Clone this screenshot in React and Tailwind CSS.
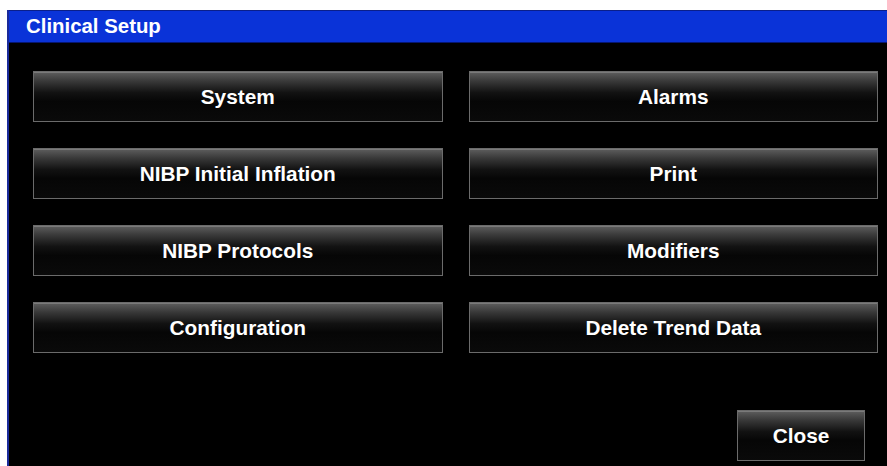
import React from 'react'

const items = [
    'System',
    'Alarms',
    'NIBP Initial Inflation',
    'Print',
    'NIBP Protocols',
    'Modifiers',
    'Configuration',
    'Delete Trend Data',
]

function SetupButton({ label, className = '' }) {
    return (
        <button
            className={`h-[51px] border border-[#6b6b6b] bg-[linear-gradient(to_bottom,#5e5e5e_0%,#3a3a3a_18%,#121212_42%,#060606_60%,#0a0a0a_100%)] text-[20.8px] font-bold text-white shadow-[inset_0_1px_0_#7a7a7a] ${className}`}
        >
            {label}
        </button>
    )
}

export default function App() {
    return (
        <div className="w-[887px] h-[466px] bg-white pl-[7px] pt-[10px] font-['Liberation_Sans',Arial,sans-serif]">
            <div className="flex h-full flex-col border-l-2 border-[#1a2a9a] bg-black">
                {/* title bar */}
                <div className="flex h-[33px] items-center border-t border-b border-t-[#0a1f8a] border-b-[#061670] bg-[#0a33d8] pl-[17px]">
                    <h1 className="text-[20.4px] font-bold text-white">Clinical Setup</h1>
                </div>

                <div className="grid grid-cols-2 gap-x-[26px] gap-y-[26px] pl-[24px] pr-[9px] pt-[28px]">
                    {items.map((label) => (
                        <SetupButton key={label} label={label} />
                    ))}
                </div>

                <div className="mt-auto flex justify-end pb-[5px] pr-[22px]">
                    <SetupButton label="Close" className="h-[50px] w-[128px]" />
                </div>
            </div>
        </div>
    )
}
